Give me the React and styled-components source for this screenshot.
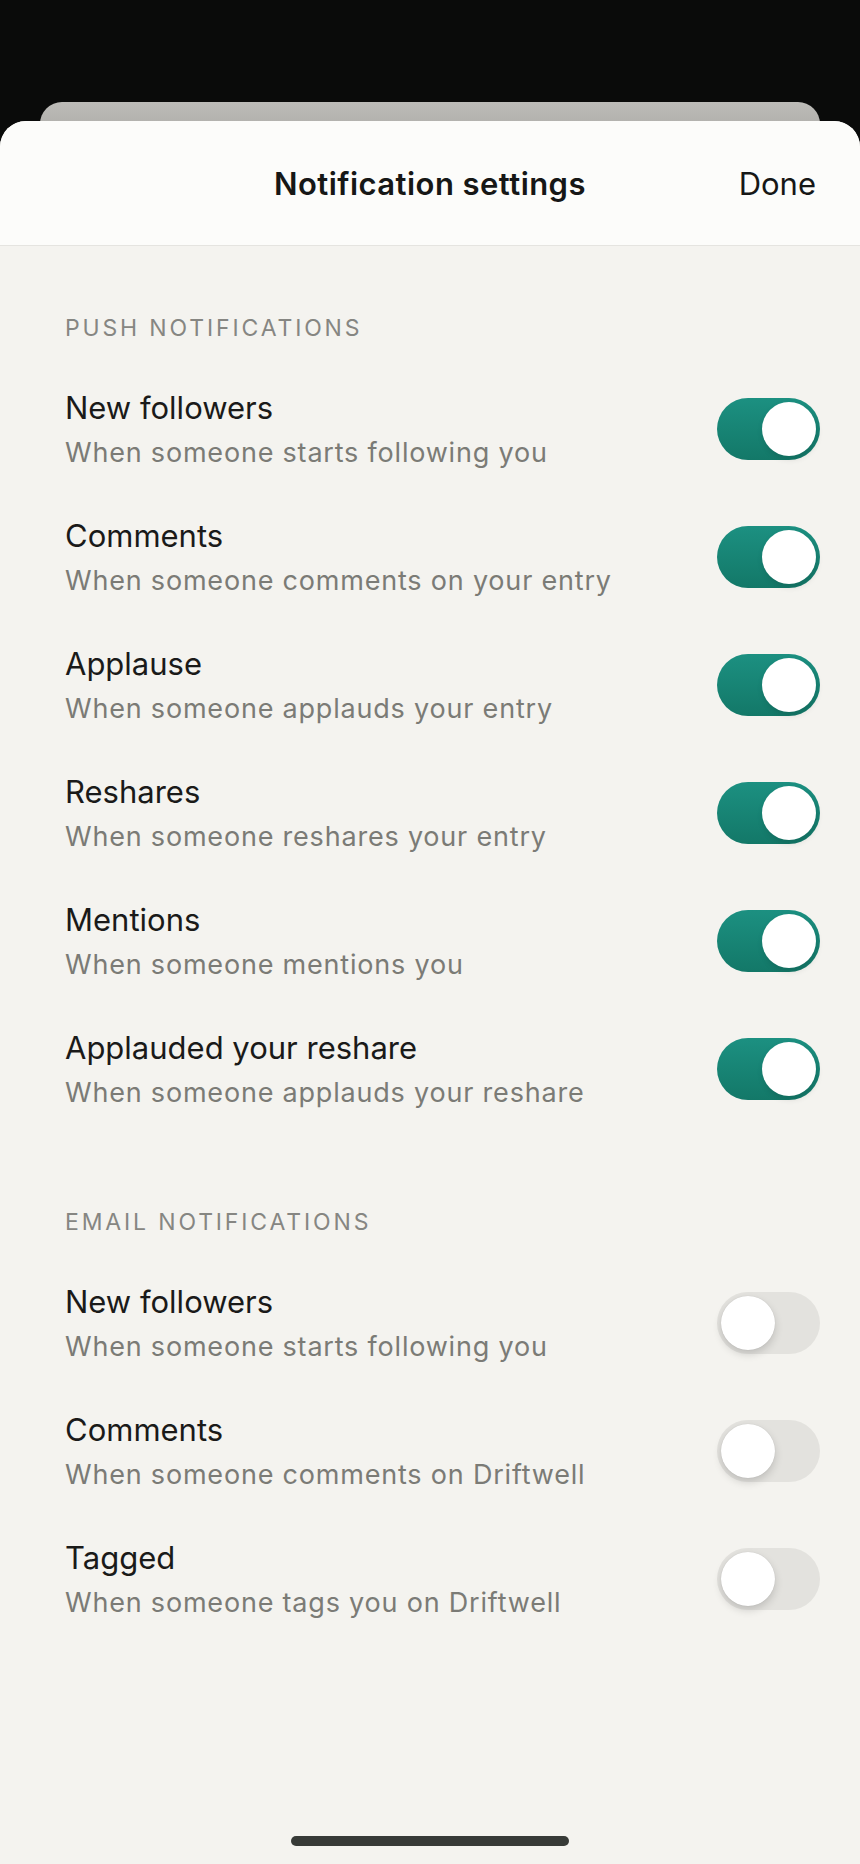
import React, { useState } from 'react';
import styled, { createGlobalStyle } from 'styled-components';

const GlobalStyle = createGlobalStyle`
  html, body {
    margin: 0;
    padding: 0;
    background: #0a0b0a;
  }
  body {
    font-family: Inter, "Noto Sans", "Liberation Sans", sans-serif;
    -webkit-font-smoothing: antialiased;
  }
`;

const Screen = styled.div`
  min-height: 100vh;
  display: flex;
  flex-direction: column;
  padding-top: 102px;
  box-sizing: border-box;
  background: #0a0b0a;
`;

const BackCard = styled.div`
  margin: 0 40px -21px;
  height: 40px;
  border-radius: 22px 22px 0 0;
  background: linear-gradient(180deg, #bdbcb8 0%, #a9a7a3 100%);
`;

const Sheet = styled.div`
  position: relative;
  z-index: 1;
  flex: 1;
  display: flex;
  flex-direction: column;
  background: #f4f3ef;
  border-radius: 26px 26px 0 0;
  overflow: hidden;
`;

const Header = styled.div`
  height: 125px;
  box-sizing: border-box;
  display: grid;
  grid-template-columns: 1fr auto 1fr;
  align-items: center;
  padding: 0 44px 0 44px;
  background: #fcfcfa;
  border-bottom: 1.5px solid #e5e4e0;
`;

const Title = styled.h1`
  grid-column: 2;
  margin: 0;
  font-size: 31px;
  font-weight: 600;
  color: #161716;
  letter-spacing: 0.45px;
`;

const DoneButton = styled.button`
  grid-column: 3;
  justify-self: end;
  border: none;
  background: none;
  padding: 0;
  font-family: inherit;
  font-size: 31px;
  font-weight: 400;
  color: #161716;
  letter-spacing: 0;
  cursor: pointer;
`;

const Content = styled.div`
  flex: 1;
  padding: 68px 40px 0 65px;
`;

const Section = styled.section`
  margin-bottom: ${(p) => p.$gap || 0}px;
`;

const SectionTitle = styled.h2`
  margin: 0 0 23px;
  font-size: 23px;
  line-height: 28px;
  font-weight: 400;
  letter-spacing: 2.85px;
  color: #868682;
  text-transform: uppercase;
`;

const Row = styled.div`
  height: 128px;
  display: flex;
  align-items: center;
  justify-content: space-between;
`;

const RowText = styled.div`
  display: flex;
  flex-direction: column;
`;

const RowTitle = styled.div`
  font-size: 31px;
  line-height: 40px;
  color: #1a1a19;
  letter-spacing: 0;
`;

const RowSub = styled.div`
  margin-top: 7px;
  font-size: 27px;
  line-height: 36px;
  color: #7b7b76;
  letter-spacing: 0.8px;
`;

const Track = styled.button`
  width: 103px;
  height: 62px;
  padding: 4px;
  box-sizing: border-box;
  border: none;
  border-radius: 31px;
  display: flex;
  align-items: center;
  justify-content: ${(p) => (p.$on ? 'flex-end' : 'flex-start')};
  background: ${(p) =>
    p.$on ? 'linear-gradient(180deg, #1c9081 0%, #137868 100%)' : '#e3e2de'};
  cursor: pointer;
  flex-shrink: 0;
`;

const Knob = styled.span`
  width: 54px;
  height: 54px;
  border-radius: 50%;
  background: #ffffff;
  box-shadow: ${(p) =>
    p.$on
      ? '1px 3px 6px rgba(0, 0, 0, 0.12)'
      : '0 4px 9px rgba(0, 0, 0, 0.16), 0 0 1px rgba(0, 0, 0, 0.15)'};
`;

const HomeBar = styled.div`
  align-self: center;
  width: 278px;
  height: 10px;
  border-radius: 5px;
  background: #373a37;
  margin-bottom: 18px;
`;

const Toggle = ({ on, onChange }) => (
  <Track $on={on} onClick={onChange} aria-pressed={on}>
    <Knob $on={on} />
  </Track>
);

const push = [
  ['New followers', 'When someone starts following you'],
  ['Comments', 'When someone comments on your entry'],
  ['Applause', 'When someone applauds your entry'],
  ['Reshares', 'When someone reshares your entry'],
  ['Mentions', 'When someone mentions you'],
  ['Applauded your reshare', 'When someone applauds your reshare'],
];

const email = [
  ['New followers', 'When someone starts following you'],
  ['Comments', 'When someone comments on Driftwell'],
  ['Tagged', 'When someone tags you on Driftwell'],
];

const App = () => {
  const [pushOn, setPushOn] = useState(push.map(() => true));
  const [emailOn, setEmailOn] = useState(email.map(() => false));

  const flip = (list, setList, i) => {
    const next = [...list];
    next[i] = !next[i];
    setList(next);
  };

  return (
    <>
      <GlobalStyle />
      <Screen>
        <BackCard />
        <Sheet>
          <Header>
            <Title>Notification settings</Title>
            <DoneButton>Done</DoneButton>
          </Header>
          <Content>
            <Section $gap={75}>
              <SectionTitle>Push notifications</SectionTitle>
              {push.map(([title, sub], i) => (
                <Row key={title}>
                  <RowText>
                    <RowTitle>{title}</RowTitle>
                    <RowSub>{sub}</RowSub>
                  </RowText>
                  <Toggle on={pushOn[i]} onChange={() => flip(pushOn, setPushOn, i)} />
                </Row>
              ))}
            </Section>
            <Section>
              <SectionTitle>Email notifications</SectionTitle>
              {email.map(([title, sub], i) => (
                <Row key={title}>
                  <RowText>
                    <RowTitle>{title}</RowTitle>
                    <RowSub>{sub}</RowSub>
                  </RowText>
                  <Toggle on={emailOn[i]} onChange={() => flip(emailOn, setEmailOn, i)} />
                </Row>
              ))}
            </Section>
          </Content>
          <HomeBar />
        </Sheet>
      </Screen>
    </>
  );
};

export default App;
